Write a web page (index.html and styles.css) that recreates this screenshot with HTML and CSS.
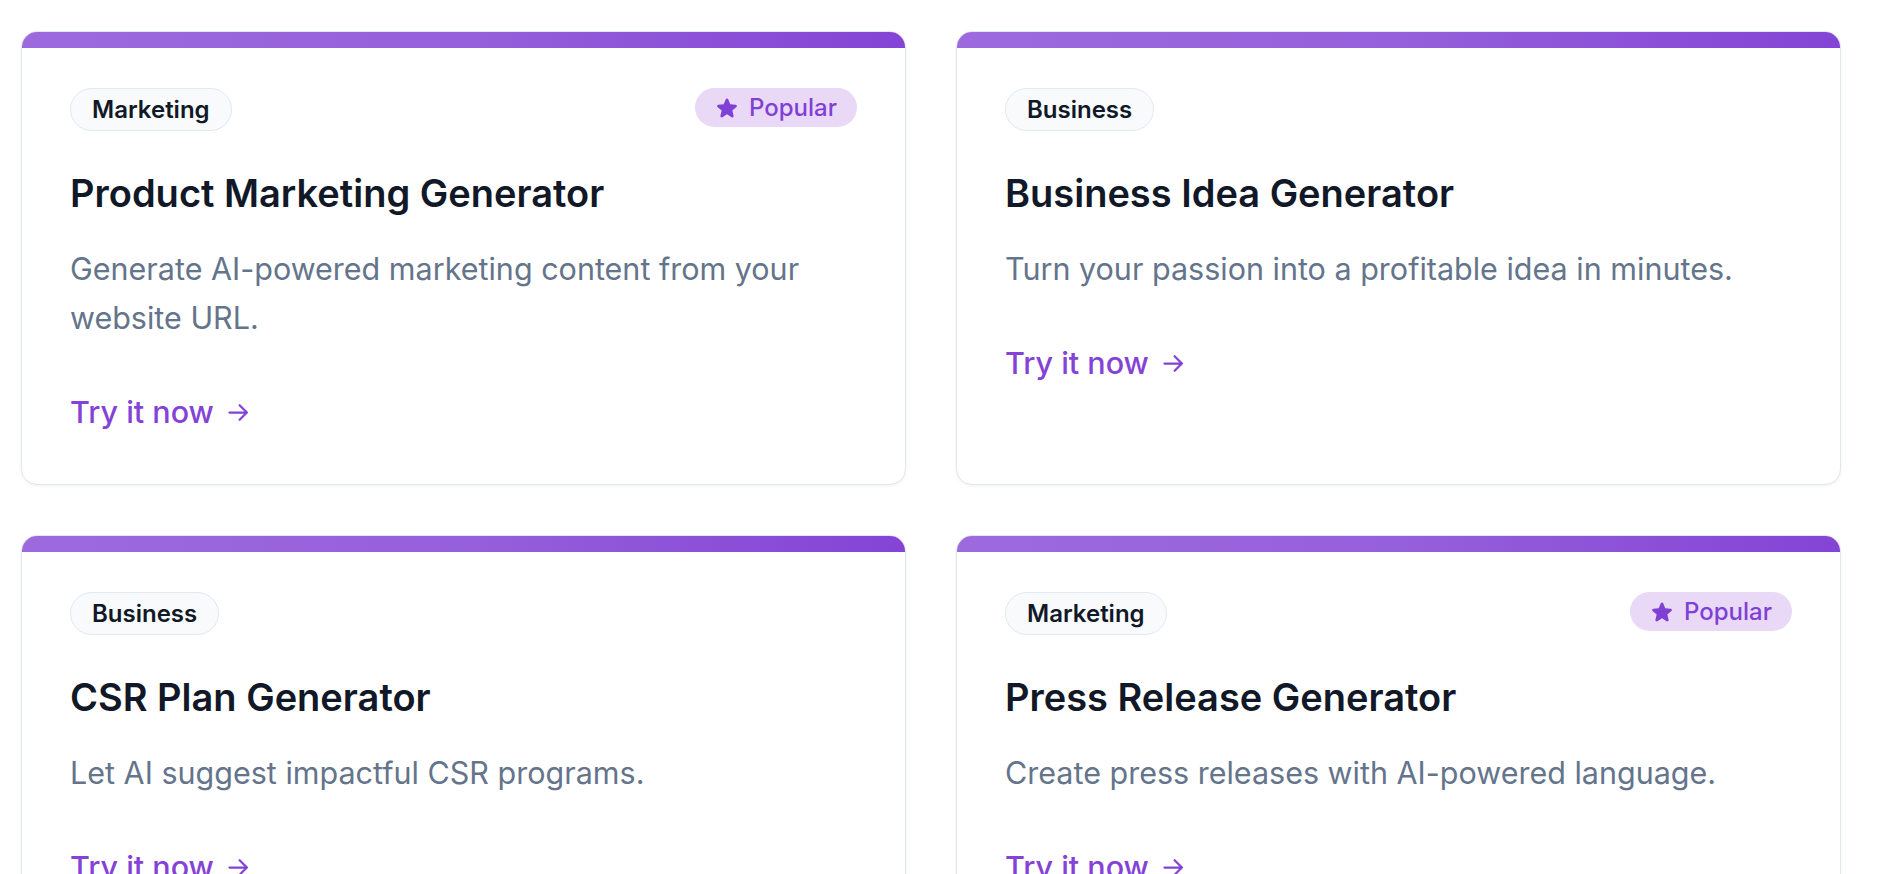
FILE: index.html
```html
<!DOCTYPE html>
<html lang="en">
<head>
<meta charset="utf-8">
<title>AI Tools</title>
<link rel="stylesheet" href="styles.css">
</head>
<body>
<main class="grid">
  <article class="card">
    <div class="card-bar"></div>
    <div class="card-body">
      <div class="card-head">
        <span class="tag">Marketing</span>
        <span class="badge"><svg class="star" viewBox="0 0 24 24" aria-hidden="true"><path d="M10.788 3.21c.448-1.077 1.976-1.077 2.424 0l2.082 5.006 5.404.434c1.164.093 1.636 1.545.749 2.305l-4.117 3.527 1.257 5.273c.271 1.136-.964 2.033-1.96 1.425L12 18.354 7.373 21.18c-.996.608-2.231-.29-1.96-1.425l1.257-5.273-4.117-3.527c-.887-.76-.415-2.212.749-2.305l5.404-.434 2.082-5.005Z"/></svg>Popular</span>
      </div>
      <h3 class="card-title">Product Marketing Generator</h3>
      <p class="card-desc">Generate AI-powered marketing content from your website URL.</p>
      <a class="card-link" href="#">Try it now <svg class="arrow" viewBox="0 0 24 24" aria-hidden="true"><path d="M4 12h15M13 5.5l6.5 6.5-6.5 6.5"/></svg></a>
    </div>
  </article>
  <article class="card">
    <div class="card-bar"></div>
    <div class="card-body">
      <div class="card-head">
        <span class="tag">Business</span>
      </div>
      <h3 class="card-title">Business Idea Generator</h3>
      <p class="card-desc">Turn your passion into a profitable idea in minutes.</p>
      <a class="card-link" href="#">Try it now <svg class="arrow" viewBox="0 0 24 24" aria-hidden="true"><path d="M4 12h15M13 5.5l6.5 6.5-6.5 6.5"/></svg></a>
    </div>
  </article>
  <article class="card">
    <div class="card-bar"></div>
    <div class="card-body">
      <div class="card-head">
        <span class="tag">Business</span>
      </div>
      <h3 class="card-title">CSR Plan Generator</h3>
      <p class="card-desc">Let AI suggest impactful CSR programs.</p>
      <a class="card-link" href="#">Try it now <svg class="arrow" viewBox="0 0 24 24" aria-hidden="true"><path d="M4 12h15M13 5.5l6.5 6.5-6.5 6.5"/></svg></a>
    </div>
  </article>
  <article class="card">
    <div class="card-bar"></div>
    <div class="card-body">
      <div class="card-head">
        <span class="tag">Marketing</span>
        <span class="badge"><svg class="star" viewBox="0 0 24 24" aria-hidden="true"><path d="M10.788 3.21c.448-1.077 1.976-1.077 2.424 0l2.082 5.006 5.404.434c1.164.093 1.636 1.545.749 2.305l-4.117 3.527 1.257 5.273c.271 1.136-.964 2.033-1.96 1.425L12 18.354 7.373 21.18c-.996.608-2.231-.29-1.96-1.425l1.257-5.273-4.117-3.527c-.887-.76-.415-2.212.749-2.305l5.404-.434 2.082-5.005Z"/></svg>Popular</span>
      </div>
      <h3 class="card-title">Press Release Generator</h3>
      <p class="card-desc">Create press releases with AI-powered language.</p>
      <a class="card-link" href="#">Try it now <svg class="arrow" viewBox="0 0 24 24" aria-hidden="true"><path d="M4 12h15M13 5.5l6.5 6.5-6.5 6.5"/></svg></a>
    </div>
  </article>
</main>
</body>
</html>
```

FILE: styles.css
```css
* { box-sizing: border-box; }

html, body {
  margin: 0;
  padding: 0;
  background: #ffffff;
  overflow: hidden;
}

body {
  font-family: Inter, "Noto Sans", "Liberation Sans", sans-serif;
  color: #0f172a;
}

.grid {
  display: grid;
  grid-template-columns: 885px 885px;
  column-gap: 50px;
  row-gap: 50px;
  padding: 31px 0 0 21px;
}

.card {
  display: flex;
  flex-direction: column;
  background: #ffffff;
  border: 1px solid #e2e6ef;
  border-radius: 16px;
  overflow: hidden;
  box-shadow: 0 1px 3px rgba(15, 23, 42, 0.06);
}

.card-bar {
  height: 16px;
  background: linear-gradient(90deg, #9d6ade 0%, #9560db 50%, #8444d5 100%);
}

.card-body {
  padding: 40px 48px 52px;
}

.card-head {
  display: flex;
  justify-content: space-between;
  align-items: flex-start;
  margin-bottom: 39px;
}

.tag {
  display: inline-block;
  padding: 4px 21px;
  line-height: 33px;
  font-size: 24px;
  font-weight: 600;
  color: #111827;
  background: #f8fafc;
  border: 1px solid #e2e8f0;
  border-radius: 999px;
}

.badge {
  display: inline-flex;
  align-items: center;
  gap: 10px;
  padding: 3px 20px;
  line-height: 33px;
  font-size: 24px;
  font-weight: 500;
  color: #8040d6;
  background: #e9d9f6;
  border-radius: 999px;
}

.star {
  width: 24px;
  height: 24px;
  fill: #8040d6;
}

.card-title {
  margin: 0 0 28px;
  font-size: 38px;
  line-height: 46px;
  font-weight: 600;
  color: #111827;
}

.card-desc {
  margin: 0 0 50px;
  font-size: 30.5px;
  line-height: 49px;
  font-weight: 400;
  color: #64748b;
}

.card-link {
  display: inline-flex;
  align-items: center;
  gap: 11px;
  align-self: flex-start;
  font-size: 30.5px;
  line-height: 40px;
  font-weight: 500;
  color: #8443d6;
  text-decoration: none;
}

.arrow {
  width: 27px;
  height: 27px;
  fill: none;
  stroke: #8443d6;
  stroke-width: 2;
  stroke-linecap: round;
  stroke-linejoin: round;
}
```
